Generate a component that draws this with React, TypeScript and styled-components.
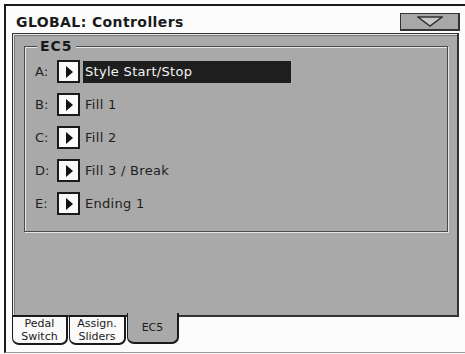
import { createGlobalStyle, styled } from "styled-components";

const GlobalStyle = createGlobalStyle`
  html, body {
    margin: 0;
    padding: 0;
    background: #fcfcfc;
  }
`;

const font = `"DejaVu Sans", "Liberation Sans", sans-serif`;

// pads of the EC5 controller
const pads = [
  { key: "A", name: "Style Start/Stop", selected: true },
  { key: "B", name: "Fill 1" },
  { key: "C", name: "Fill 2" },
  { key: "D", name: "Fill 3 / Break" },
  { key: "E", name: "Ending 1" },
];

const tabs = [
  { label: ["Pedal", "Switch"], width: 56 },
  { label: ["Assign.", "Sliders"], width: 57 },
  { label: ["EC5"], width: 52, active: true },
];

const App = () => {
  return (
    <>
      <GlobalStyle />
      <S.Screen>
        <S.Frame>
          <S.TitleBar>
            <S.Title>GLOBAL: Controllers</S.Title>
            <S.MenuButton>
              <svg width="26" height="11" viewBox="0 0 26 11">
                <polygon
                  points="1,1 25,1 13,10"
                  fill="#c8c8c8"
                  stroke="#333"
                  strokeWidth="1.4"
                />
              </svg>
            </S.MenuButton>
          </S.TitleBar>
          <S.Panel>
            <S.Group>
              <S.Legend>EC5</S.Legend>
              <S.Rows>
                {pads.map((p) => (
                  <S.Row key={p.key}>
                    <S.Key>{p.key}:</S.Key>
                    <S.PlayButton>
                      <svg width="8" height="12" viewBox="0 0 8 12">
                        <polygon points="1,0 8,6 1,12" fill="#111" />
                      </svg>
                    </S.PlayButton>
                    <S.Name $selected={!!p.selected}>{p.name}</S.Name>
                  </S.Row>
                ))}
              </S.Rows>
            </S.Group>
          </S.Panel>
          <S.TabRow>
            {tabs.map((t) => (
              <S.Tab key={t.label.join(" ")} $active={!!t.active} $width={t.width}>
                {t.label.map((l) => (
                  <S.TabLine key={l}>{l}</S.TabLine>
                ))}
              </S.Tab>
            ))}
          </S.TabRow>
        </S.Frame>
      </S.Screen>
    </>
  );
};

const S = {
  Screen: styled.div`
    width: 465px;
    height: 354px;
    box-sizing: border-box;
    padding: 4px 0 0 4px;
    background: #fcfcfc;
    overflow: hidden;
  `,
  Frame: styled.div`
    height: 349px;
    box-sizing: border-box;
    border-top: 2px solid #1a1a1a;
    border-left: 2px solid #1a1a1a;
    border-bottom: 1px solid #9a9a9a;
    padding-left: 6px;
    font-family: ${font};
  `,
  TitleBar: styled.div`
    height: 27px;
    display: flex;
    align-items: flex-start;
    justify-content: space-between;
    padding-right: 5px;
  `,
  Title: styled.div`
    margin: 8px 0 0 4px;
    font-size: 14px;
    line-height: 16px;
    font-weight: bold;
    letter-spacing: 0.4px;
    color: #1a1a1a;
  `,
  MenuButton: styled.div`
    margin-top: 7px;
    width: 60px;
    height: 18px;
    box-sizing: border-box;
    background: #a8a8a8;
    border: 1px solid #333;
    border-right-width: 2px;
    border-bottom-width: 2px;
    display: flex;
    align-items: center;
    justify-content: center;
  `,
  Panel: styled.div`
    width: 447px;
    height: 284px;
    box-sizing: border-box;
    background: #a9a9a9;
    border: 1px solid #333;
    border-right-width: 2px;
    border-bottom-width: 2px;
    box-shadow: inset 1px 1px 0 #e8e8e8, inset 2px 2px 0 #7a7a7a;
    padding: 12px 9px 0 11px;
  `,
  Group: styled.div`
    position: relative;
    height: 186px;
    box-sizing: border-box;
    border: 1px solid #4a4a4a;
    box-shadow: inset 1px 1px 0 #e6e6e6, 1px 1px 0 #e6e6e6;
    padding: 13px 0 0 10px;
  `,
  Legend: styled.div`
    position: absolute;
    top: -9px;
    left: 12px;
    padding: 0 3px;
    background: #a9a9a9;
    font-size: 14px;
    font-weight: bold;
    letter-spacing: 1px;
    line-height: 16px;
    color: #1a1a1a;
  `,
  Rows: styled.div`
    display: flex;
    flex-direction: column;
    gap: 10px;
  `,
  Row: styled.div`
    display: flex;
    align-items: center;
    height: 23px;
  `,
  Key: styled.span`
    width: 22px;
    font-size: 13px;
    color: #1e1e1e;
  `,
  PlayButton: styled.div`
    width: 23px;
    height: 23px;
    box-sizing: border-box;
    background: #fafafa;
    border: 2px solid #1a1a1a;
    display: flex;
    align-items: center;
    justify-content: center;
    padding-left: 1px;
  `,
  Name: styled.div<{ $selected: boolean }>`
    margin-left: 3px;
    height: 22px;
    width: ${({ $selected }) => ($selected ? "208px" : "auto")};
    box-sizing: border-box;
    padding-left: 2px;
    display: flex;
    align-items: center;
    font-size: 13px;
    letter-spacing: 0.3px;
    color: ${({ $selected }) => ($selected ? "#f4f4f4" : "#1e1e1e")};
    background: ${({ $selected }) => ($selected ? "#1e1e1e" : "transparent")};
  `,
  TabRow: styled.div`
    display: flex;
    margin-top: -2px;
  `,
  Tab: styled.div<{ $active: boolean; $width: number }>`
    width: ${({ $width }) => $width}px;
    height: ${({ $active }) => ($active ? "31px" : "30px")};
    margin-top: ${({ $active }) => ($active ? "-2px" : "0")};
    box-sizing: border-box;
    display: flex;
    flex-direction: column;
    align-items: center;
    justify-content: center;
    color: #1a1a1a;
    background: ${({ $active }) => ($active ? "#a9a9a9" : "#fafafa")};
    border: 1px solid #1a1a1a;
    border-top: ${({ $active }) => ($active ? "none" : "2px solid #1a1a1a")};
    border-right-width: 2px;
    border-bottom-width: 2px;
    border-radius: 0 0 7px 7px;
    margin-right: 1px;
  `,
  TabLine: styled.span`
    display: block;
    font-size: 11px;
    line-height: 13px;
  `,
};

export default App;
